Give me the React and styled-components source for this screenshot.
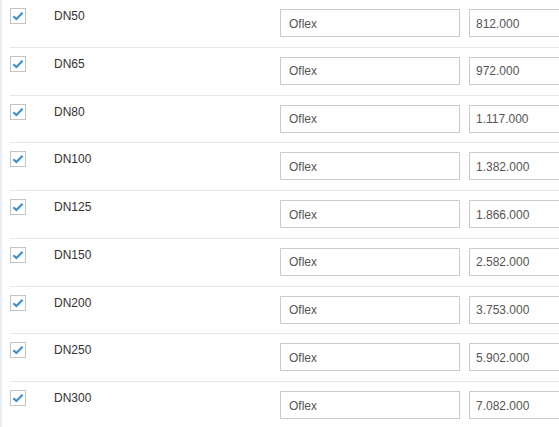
import React from 'react';
import styled, { createGlobalStyle } from 'styled-components';

const GlobalStyle = createGlobalStyle`
  html, body {
    margin: 0;
    padding: 0;
    background: #fff;
    overflow: hidden;
  }
  body {
    font-family: "Liberation Sans", Arial, sans-serif;
    font-size: 12px;
    color: #333;
  }
`;

const Panel = styled.div`
  border-left: 2px solid #e9edf2;
  padding-left: 8px;
  margin-top: -1px;
  min-height: 440px;
  overflow: hidden;
`;

const Row = styled.div`
  box-sizing: border-box;
  height: 47.75px;
  display: flex;
  align-items: flex-start;
  padding-top: 8px;
  border-top: 1px solid #e6e6e6;
  overflow: hidden;
`;

const Box = styled.span`
  box-sizing: border-box;
  flex: none;
  width: 16px;
  height: 16px;
  border: 1px solid #c4c4c4;
  background: #fff;
  display: flex;
  align-items: center;
  justify-content: center;
`;

const Label = styled.span`
  width: 226px;
  flex: none;
  padding-left: 28px;
  line-height: 16px;
  color: #333;
`;

const Field = styled.div`
  box-sizing: border-box;
  flex: none;
  margin-top: 1px;
  width: ${p => p.$width}px;
  height: 28px;
  margin-right: 9px;
  border: 1px solid #cbcbcb;
  padding: 1px 0 0 ${p => p.$pad}px;
  display: flex;
  align-items: center;
  color: #555;
  background: #fff;
`;

const Check = () => (
  <svg width="14" height="14" viewBox="0 0 14 14">
    <polyline
      points="2.4,7.2 5.4,10.1 11.6,3.8"
      fill="none"
      stroke="#3a8fd0"
      strokeWidth="2.1"
    />
  </svg>
);

const rows = [
  ['DN50', '812.000'],
  ['DN65', '972.000'],
  ['DN80', '1.117.000'],
  ['DN100', '1.382.000'],
  ['DN125', '1.866.000'],
  ['DN150', '2.582.000'],
  ['DN200', '3.753.000'],
  ['DN250', '5.902.000'],
  ['DN300', '7.082.000'],
];

export default function App() {
  return (
    <>
      <GlobalStyle />
      <Panel>
        {rows.map(([size, price]) => (
          <Row key={size}>
            <Box><Check /></Box>
            <Label>{size}</Label>
            <Field $width={180} $pad={8}>Oflex</Field>
            <Field $width={130} $pad={6}>{price}</Field>
          </Row>
        ))}
      </Panel>
    </>
  );
}
